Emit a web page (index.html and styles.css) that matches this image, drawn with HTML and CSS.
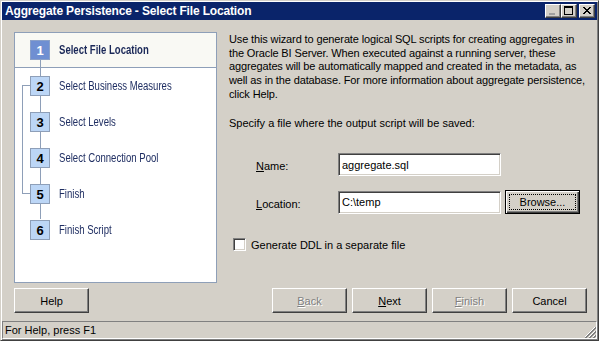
FILE: index.html
```html
<!DOCTYPE html>
<html>
<head>
<meta charset="utf-8">
<link rel="stylesheet" href="styles.css">
</head>
<body>
<div class="window">
  <div class="titlebar">
    <span class="title">Aggregate Persistence - Select File Location</span>
    <div class="tbtns">
      <span class="tb"><svg width="16" height="14" viewBox="0 0 16 14"><rect x="4" y="9" width="6" height="2" fill="#a0a0a0"/></svg></span>
      <span class="tb"><svg width="16" height="14" viewBox="0 0 16 14"><rect x="3.5" y="2.5" width="8" height="8" fill="none" stroke="#000"/><rect x="3" y="2" width="9" height="2" fill="#000"/></svg></span>
      <span class="tb tb-close"><svg width="16" height="14" viewBox="0 0 16 14"><path d="M4 3 L11 10 M5 3 L12 10 M11 3 L4 10 M12 3 L5 10" stroke="#000" stroke-width="1"/></svg></span>
    </div>
  </div>
  <div class="content">
    <div class="main">
      <div class="steps">
        <div class="step-head">
          <span class="num num-active">1</span><span class="step-label step-label-active">Select File Location</span>
        </div>
        <div class="step-list">
          <div class="step"><span class="num">2</span><span class="step-label">Select Business Measures</span></div>
          <div class="step"><span class="num">3</span><span class="step-label">Select Levels</span></div>
          <div class="step"><span class="num">4</span><span class="step-label">Select Connection Pool</span></div>
          <div class="step"><span class="num">5</span><span class="step-label">Finish</span></div>
          <div class="step"><span class="num">6</span><span class="step-label">Finish Script</span></div>
        </div>
        <span class="line-main"></span>
        <span class="line-branch"></span>
      </div>
      <div class="pane">
        <p class="intro">Use this wizard to generate logical SQL scripts for creating aggregates in the Oracle BI Server. When executed against a running server, these aggregates will be automatically mapped and created in the metadata, as well as in the database. For more information about aggregate persistence, click Help.</p>
        <p class="spec">Specify a file where the output script will be saved:</p>
        <div class="form">
          <span class="flabel"><u>N</u>ame:</span>
          <span class="field">aggregate.sql</span>
          <span></span>
          <span class="flabel"><u>L</u>ocation:</span>
          <span class="field">C:\temp</span>
          <span class="btn btn-default"><span class="focus">Browse...</span></span>
        </div>
        <div class="check"><span class="cbox"></span><span>Generate DDL in a separate file</span></div>
      </div>
    </div>
    <div class="buttons">
      <span class="btn">Help</span>
      <span class="spacer"></span>
      <span class="btn btn-disabled"><u>B</u>ack</span>
      <span class="btn"><u>N</u>ext</span>
      <span class="btn btn-disabled"><u>F</u>inish</span>
      <span class="btn">Cancel</span>
    </div>
  </div>
  <div class="status">
    <span class="status-text">For Help, press F1</span>
    <svg class="grip" width="12" height="12" viewBox="0 0 12 12">
      <path d="M11 1 L1 11 M11 5 L5 11 M11 9 L9 11" stroke="#fff" stroke-width="1"/>
      <path d="M12 1 L1 12 M12 2 L2 12 M12 5 L5 12 M12 6 L6 12 M12 9 L9 12 M12 10 L10 12" stroke="#808080" stroke-width="1"/>
    </svg>
  </div>
</div>
</body>
</html>
```

FILE: styles.css
```css
* { box-sizing: border-box; }
html, body { margin: 0; padding: 0; background: #d4d0c8; }
body { font-family: "Liberation Sans", Arial, sans-serif; font-size: 11px; color: #000; }

.window {
  width: 599px;
  height: 341px;
  background: #d4d0c8;
  border: 1px solid;
  border-color: #d4d0c8 #404040 #404040 #d4d0c8;
  box-shadow: inset 1px 1px 0 #fff, inset -1px -1px 0 #808080;
  padding: 1px;
  display: flex;
  flex-direction: column;
}

.titlebar {
  height: 18px;
  background: #0a246a;
  display: flex;
  align-items: center;
  justify-content: space-between;
  padding: 0 2px 0 3px;
  flex: none;
}
.title {
  color: #fff;
  font-weight: bold;
  font-size: 12px;
  letter-spacing: -0.16px;
}
.tbtns { display: flex; gap: 0; }
.tb {
  width: 16px;
  height: 14px;
  background: #d4d0c8;
  border: 1px solid;
  border-color: #fff #404040 #404040 #fff;
  box-shadow: inset -1px -1px 0 #808080;
  display: block;
  position: relative;
}
.tb svg { position: absolute; left: -1px; top: -1px; }
.tb-close { margin-left: 2px; }

.content { flex: none; padding: 12px 10px 0 12px; }
.main { display: flex; gap: 12px; height: 251px; }

.steps {
  position: relative;
  width: 203px;
  height: 251px;
  background: #fff;
  border: 1px solid #8e9fb8;
  flex: none;
  overflow: hidden;
}
.step-head {
  height: 35px;
  background: #f9f9f4;
  border-bottom: 1px solid #8e9fb8;
  display: flex;
  align-items: center;
  padding-left: 15px;
}
.num {
  width: 20px;
  height: 20px;
  border: 1px solid #8e9fb8;
  background: #bcd6f6;
  font-weight: bold;
  font-size: 13px;
  display: flex;
  align-items: center;
  justify-content: center;
  flex: none;
  position: relative;
  z-index: 1;
  color: #000;
}
.num-active { background: #6f8fd2; color: #fff; border-color: #8aa0c8; }
.step-label {
  display: inline-block;
  margin-left: 9px;
  font-size: 12.5px;
  color: #1f2e62;
  white-space: nowrap;
  transform: scaleX(0.765);
  transform-origin: left center;
}
.step-label-active { font-weight: bold; color: #1a2858; }
.step-list {
  display: flex;
  flex-direction: column;
  gap: 16px;
  padding: 8px 0 0 15px;
}
.step { display: flex; align-items: center; height: 20px; }

.line-main {
  position: absolute;
  left: 25px;
  top: 26px;
  height: 160px;
  border-left: 1px solid #8e9fb8;
}
.line-branch {
  position: absolute;
  left: 7px;
  top: 52px;
  width: 9px;
  height: 109px;
  border: 1px solid #8e9fb8;
  border-right: none;
}

.pane { flex: 1; min-width: 0; padding-top: 1px; }
.intro { margin: 0; line-height: 13.67px; letter-spacing: -0.13px; }
.spec { margin: 16px 0 0 0; line-height: 13.67px; }

.form {
  display: grid;
  grid-template-columns: 78px 163px 77px;
  column-gap: 4px;
  row-gap: 14px;
  margin: 22px 0 0 27px;
  align-items: center;
}
.flabel { padding-top: 3px; }
.field {
  height: 23px;
  background: #fff;
  border: 1px solid;
  border-color: #808080 #fff #fff #808080;
  box-shadow: inset 1px 1px 0 #404040, inset -1px -1px 0 #d4d0c8;
  padding: 0 3px;
  display: flex;
  align-items: center;
}

.btn {
  width: 75px;
  height: 25px;
  background: #d4d0c8;
  border: 1px solid;
  border-color: #fff #404040 #404040 #fff;
  box-shadow: inset -1px -1px 0 #808080;
  display: flex;
  align-items: center;
  justify-content: center;
  flex: none;
}
.btn-default {
  border: 1px solid #000;
  box-shadow: inset 1px 1px 0 #fff, inset -1px -1px 0 #404040, inset -2px -2px 0 #808080;
  height: 24px;
  padding: 3px;
}
.focus {
  border: 1px dotted #000;
  width: 100%;
  height: 100%;
  display: flex;
  align-items: center;
  justify-content: center;
}
.btn-disabled { color: #808080; text-shadow: 1px 1px 0 #fff; }

.check {
  display: flex;
  align-items: center;
  gap: 5px;
  margin: 24px 0 0 4px;
}
.cbox {
  width: 13px;
  height: 13px;
  background: #fff;
  border: 1px solid;
  border-color: #808080 #fff #fff #808080;
  box-shadow: inset 1px 1px 0 #404040, inset -1px -1px 0 #d4d0c8;
}

.buttons {
  display: flex;
  gap: 5px;
  margin-top: 5px;
  padding-right: 0;
}
.spacer { flex: 1; }

.status {
  margin: 8px 0 0 0;
  height: 18px;
  border: 1px solid;
  border-color: #808080 #fff #fff #808080;
  display: flex;
  align-items: center;
  justify-content: space-between;
  padding-left: 2px;
  position: relative;
}
.grip { position: absolute; right: 0; bottom: 0; }
```
